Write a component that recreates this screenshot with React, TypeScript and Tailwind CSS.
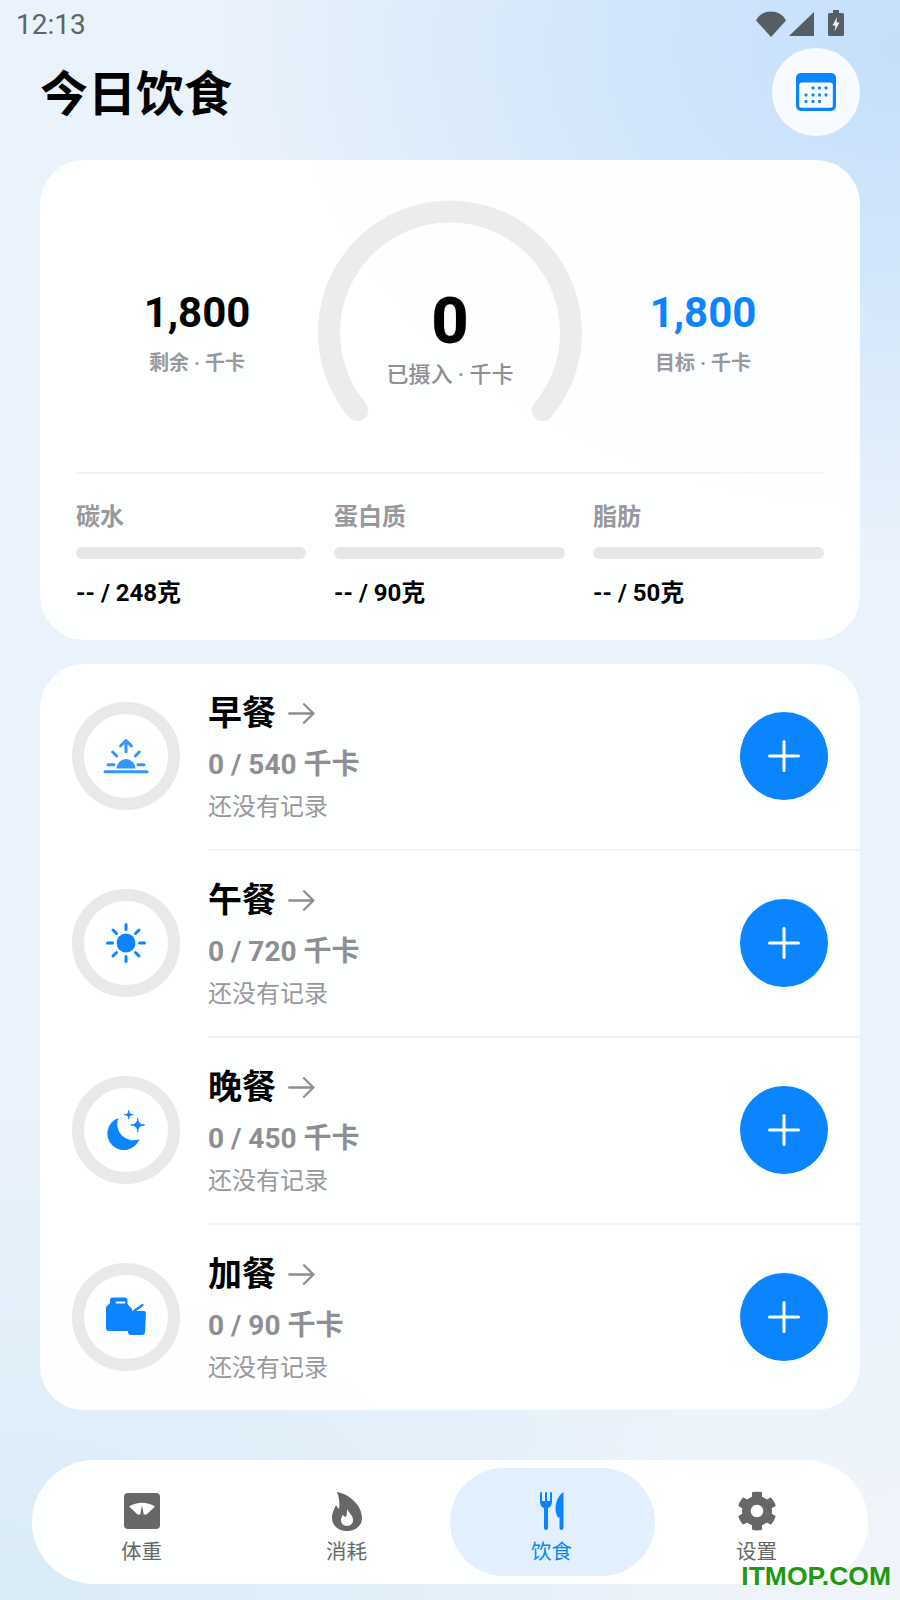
import React from "react";
import { FaCog } from "react-icons/fa";

const FONT = "font-['Roboto','Noto_Sans_CJK_SC',sans-serif]";

function Star({ cx, cy, r }: { cx: number; cy: number; r: number }) {
  return (
    <path
      d={`M${cx} ${cy - r}Q${cx} ${cy} ${cx + r} ${cy}Q${cx} ${cy} ${cx} ${cy + r}Q${cx} ${cy} ${cx - r} ${cy}Q${cx} ${cy} ${cx} ${cy - r}Z`}
      fill="#0a84ff"
      stroke="#0a84ff"
      strokeWidth="0.8"
      strokeLinejoin="round"
    />
  );
}

function Sunrise() {
  return (
    <svg width="60" height="60" viewBox="0 0 60 60" fill="none" stroke="#3097ff" strokeWidth="3" strokeLinecap="round" strokeLinejoin="round">
      <path d="M9 45.700H51" />
      <path d="M20.500 42.600a9.500 9.500 0 0 1 19 0z" fill="#3097ff" stroke="none" />
      <path d="M12 38.700H18M42 38.700H48M16.700 26L20.700 30M43.300 26L39.300 30" />
      <path d="M30 15V25.700M24.500 20L30 14.500L35.500 20" />
    </svg>
  );
}

function Sun() {
  return (
    <svg width="60" height="60" viewBox="0 0 60 60" fill="none" stroke="#0a84ff" strokeWidth="3" strokeLinecap="round">
      <circle cx="30" cy="30" r="9.500" fill="#0a84ff" stroke="none" />
      <path d="M30 11.500V16.500M30 43.500V48.500M11.500 30H16.500M43.500 30H48.500M17 17L20.500 20.500M39.500 39.500L43 43M17 43L20.500 39.500M39.500 20.500L43 17" />
    </svg>
  );
}

function Moon() {
  return (
    <svg width="60" height="60" viewBox="0 0 60 60" fill="none">
      <path d="M22.500 18A16.500 16.500 0 1 0 43.500 39A16 16 0 0 1 22.500 18Z" fill="#0a84ff" />
      <Star cx={41.7} cy={25} r={7} />
      <Star cx={32.7} cy={14.7} r={4.5} />
    </svg>
  );
}

function Snack() {
  return (
    <svg width="60" height="60" viewBox="0 0 60 60" fill="none">
      <path d="M14 13a2.500 2.500 0 0 1 2.500-2.500H29a2.500 2.500 0 0 1 2.500 2.500V17L36 22V44H13a3 3 0 0 1-3-3V20L14 16Z" fill="#0a84ff" />
      <path d="M31 26a2 2 0 0 1 2-2H48a2 2 0 0 1 2 2L49 45a3 3 0 0 1-3 3H35a3 3 0 0 1-3-3Z" fill="#0a84ff" />
      <path d="M37.500 24.500L46.500 18" stroke="#0a84ff" strokeWidth="2.2" strokeLinecap="round" />
      <path d="M20.500 15.500H28.500" stroke="#ffffff" strokeWidth="1.8" strokeLinecap="round" />
    </svg>
  );
}

function Arrow() {
  return (
    <svg width="27" height="21" viewBox="0 0 27 21" fill="none" stroke="#8e8e93" strokeWidth="2.300" strokeLinecap="round" strokeLinejoin="round" className="ml-[12px]">
      <path d="M1.200 10.500H25.500M16 1.200L25.500 10.500L16 19.800" />
    </svg>
  );
}

function Calendar() {
  const dots: [number, number][] = [
    [17, 15], [23.5, 15], [30, 15],
    [10, 22], [17, 22], [23.5, 22], [30, 22],
    [10, 28.5], [17, 28.5], [23.5, 28.5],
  ];
  return (
    <svg width="40" height="38" viewBox="0 0 40 38">
      <rect x="0" y="0" width="40" height="38" rx="5" fill="#0a84ff" />
      <rect x="3.200" y="9.500" width="33.600" height="25.200" rx="2.500" fill="#f7fbff" />
      {dots.map(([x, y]) => (
        <rect key={`${x}-${y}`} x={x - 1.4} y={y - 1.4} width="2.8" height="2.8" rx="0.6" fill="#0a84ff" />
      ))}
    </svg>
  );
}

function Scale() {
  return (
    <svg width="36" height="36" viewBox="0 0 36 36">
      <rect width="36" height="36" rx="4" fill="#666867" />
      <path d="M5 13.500Q18 6 31 13.500L22.500 21.500H13.500Z" fill="#fff" />
      <path d="M18 12.500L19.800 21.800H16.200Z" fill="#666867" />
    </svg>
  );
}

function Flame() {
  return (
    <svg width="30" height="40" viewBox="0 0 30 40">
      <path d="M5 1C17 3 30 14 30 27C30 35 23 40 15 40C7 40 0 35 0 27C0 21 3 17 4 14C5 16 6 17 7 18C8 12 7 6 5 1Z" fill="#666867" />
      <path d="M15 18C17 22 21 24 21 29C21 33 18 35 15 35C12 35 9 33 9 29C9 27 10 25 11 24C12 25 13 26 14 26C15 24 15 21 15 18Z" fill="#fff" />
    </svg>
  );
}

function Cutlery() {
  return (
    <svg width="24" height="40" viewBox="0 0 24 40" fill="#0a84ff">
      <path d="M1 2V11M6 2V11M11 2V11" stroke="#0a84ff" strokeWidth="2" strokeLinecap="round" />
      <path d="M0 10H12C12 14 10.500 16 8 17.200V37a2 2 0 0 1-4 0V17.200C1.500 16 0 14 0 10Z" />
      <path d="M23.500 1V37a2 2 0 0 1-4 0V26.500H18C15.500 22 15 18 16 13C17 8 20 3 23.500 1Z" />
    </svg>
  );
}

function Stat({ value, label, blue }: { value: string; label: string; blue?: boolean }) {
  return (
    <div className="flex flex-col items-center pt-[128px]">
      <div className={`h-[50px] text-[42px] leading-[50px] font-bold ${blue ? "text-[#0a84ff]" : "text-black"}`}>{value}</div>
      <div className="mt-[11px] h-[28px] text-[20px] leading-[28px] font-bold text-[#98989d]">{label}</div>
    </div>
  );
}

function Macro({ name, value }: { name: string; value: string }) {
  return (
    <div className="flex flex-col">
      <div className="h-[32px] text-[24px] leading-[32px] font-bold text-[#98989d]">{name}</div>
      <div className="mt-[14px] h-[12px] rounded-full bg-[#e6e7e9]" />
      <div className="mt-[18px] h-[32px] text-[24px] leading-[32px] font-bold text-black">{value}</div>
    </div>
  );
}

function Meal({
  name, budget, icon, rowClass, circleClass, contentClass,
}: {
  name: string; budget: string; icon: React.ReactNode; rowClass: string; circleClass: string; contentClass: string;
}) {
  return (
    <div className={`flex ${rowClass}`}>
      <div className={`ml-[32px] flex h-[108px] w-[108px] shrink-0 items-center justify-center self-center rounded-full border-[12px] border-[#e8e9eb] ${circleClass}`}>
        {icon}
      </div>
      <div className={`ml-[28px] flex flex-1 items-center pr-[32px] ${contentClass}`}>
        <div className="mt-[3px] flex flex-col">
          <div className="flex h-[44px] items-center">
            <span className="text-[34px] leading-[44px] font-bold text-black">{name}</span>
            <Arrow />
          </div>
          <div className="mt-[10px] h-[40px] text-[28px] leading-[40px] font-bold text-[#8e8e93]">{budget}</div>
          <div className="mt-[5px] h-[34px] text-[24px] leading-[34px] text-[#98989d]">还没有记录</div>
        </div>
        <div className="ml-auto flex h-[88px] w-[88px] items-center justify-center rounded-full bg-[#0a84ff]">
          <svg width="32" height="32" viewBox="0 0 32 32" stroke="#ffffff" strokeWidth="3" strokeLinecap="round">
            <path d="M16 1.500V30.500M1.500 16H30.500" />
          </svg>
        </div>
      </div>
    </div>
  );
}

function Tab({ label, icon, active }: { label: string; icon: React.ReactNode; active?: boolean }) {
  return (
    <div className={`flex h-[108px] w-[205px] flex-col items-center rounded-full pr-[2px] pt-[23px] ${active ? "bg-[#e1effe]" : ""}`}>
      <div className="flex h-[40px] items-center justify-center">{icon}</div>
      <div className={`mt-[7px] h-[28px] text-[20.5px] leading-[28px] ${active ? "text-[#0a84ff]" : "text-[#666867]"}`}>{label}</div>
    </div>
  );
}

export default function App() {
  return (
    <div
      className={`${FONT} relative flex h-[1600px] w-[900px] flex-col overflow-hidden bg-[#eaf2fb] bg-[radial-gradient(ellipse_75%_32%_at_100%_3%,#c5dffb_0%,#d5e8fb_50%,rgba(220,235,250,0)_100%),radial-gradient(ellipse_80%_30%_at_0%_100%,#d9ecf8_0%,rgba(217,236,248,0)_100%),radial-gradient(ellipse_50%_20%_at_100%_100%,#f1f5fa_0%,rgba(241,245,250,0)_100%)]`}
    >
      <div className="flex h-[48px] shrink-0 items-start justify-between pl-[16px] pr-[56px]">
        <div className="mt-[7px] text-[28px] leading-[36px] text-[#5f6468]">12:13</div>
        <div className="mt-[10px] flex items-start">
          <svg width="30" height="26" viewBox="0 0 30 26" className="mt-[1px]">
            <path d="M0 9.500A17 17 0 0 1 30 9.500L15 26Z" fill="#555d65" />
          </svg>
          <svg width="25" height="24" viewBox="0 0 25 24" className="ml-[3px] mt-[2px]">
            <path d="M0 24L25 0V24Z" fill="#555d65" />
          </svg>
          <svg width="16" height="26" viewBox="0 0 16 26" className="ml-[14px]">
            <path d="M5 0H11V3H14.500A1.500 1.500 0 0 1 16 4.500V24.500A1.500 1.500 0 0 1 14.500 26H1.500A1.500 1.500 0 0 1 0 24.500V4.500A1.500 1.500 0 0 1 1.500 3H5Z" fill="#555d65" />
            <path d="M9 7L4.500 15.500H7.500L6.500 21.500L11.500 12.500H8.500Z" fill="#eef5fd" />
          </svg>
        </div>
      </div>

      <div className="flex h-[88px] shrink-0 items-center justify-between pl-[40px] pr-[40px]">
        <h1 className="mt-[5px] text-[48px] leading-[60px] font-bold text-black">今日饮食</h1>
        <div className="flex h-[88px] w-[88px] items-center justify-center rounded-full bg-[#f7fbff]">
          <Calendar />
        </div>
      </div>

      <section className="mx-[40px] mt-[24px] h-[480px] shrink-0 rounded-[44px] bg-white/[0.94] px-[36px]">
        <div className="grid h-[312px] grid-cols-[242px_264px_242px]">
          <Stat value="1,800" label="剩余 · 千卡" />
          <div className="relative pt-[40px]">
            <svg width="264" height="225" viewBox="0 0 264 225" fill="none" className="block">
              <path d="M39.300 210.200A121 121 0 1 1 224.700 210.200" stroke="#ebecee" strokeWidth="22" strokeLinecap="round" />
            </svg>
            <div className="absolute inset-x-0 top-[126px] flex flex-col items-center">
              <div className="h-[70px] text-[65px] leading-[70px] font-extrabold text-black">0</div>
              <div className="mt-[4px] h-[30px] text-[22px] leading-[30px] font-medium text-[#8e8e93]">已摄入 · 千卡</div>
            </div>
          </div>
          <Stat value="1,800" label="目标 · 千卡" blue />
        </div>
        <div className="h-[2px] bg-[#f3f3f6]" />
        <div className="mt-[27px] grid grid-cols-[230px_231px_231px] gap-[28px]">
          <Macro name="碳水" value="-- / 248克" />
          <Macro name="蛋白质" value="-- / 90克" />
          <Macro name="脂肪" value="-- / 50克" />
        </div>
      </section>

      <section className="mx-[40px] mt-[24px] flex h-[746px] shrink-0 flex-col rounded-[44px] bg-white/[0.94]">
        <Meal name="早餐" budget="0 / 540 千卡" icon={<Sunrise />} rowClass="h-[187px]" circleClass="mb-[3px]" contentClass="border-b-2 border-[#f3f3f6] pb-[1px]" />
        <Meal name="午餐" budget="0 / 720 千卡" icon={<Sun />} rowClass="h-[187px]" circleClass="mb-[3px]" contentClass="border-b-2 border-[#f3f3f6] pb-[1px]" />
        <Meal name="晚餐" budget="0 / 450 千卡" icon={<Moon />} rowClass="h-[187px]" circleClass="mb-[3px]" contentClass="border-b-2 border-[#f3f3f6] pb-[1px]" />
        <Meal name="加餐" budget="0 / 90 千卡" icon={<Snack />} rowClass="h-[185px]" circleClass="mb-[1px]" contentClass="pb-[1px]" />
      </section>

      <nav className="mx-[32px] mt-[50px] flex h-[124px] shrink-0 rounded-[62px] bg-white/[0.96] p-[8px]">
        <Tab label="体重" icon={<Scale />} />
        <Tab label="消耗" icon={<Flame />} />
        <Tab label="饮食" icon={<Cutlery />} active />
        <Tab label="设置" icon={<FaCog className="h-[40px] w-[40px] text-[#666867]" />} />
      </nav>

      <div className="absolute bottom-[9px] right-[9px] font-['Liberation_Sans',sans-serif] text-[26.5px] leading-[30px] font-bold text-[#1f9a10]">ITMOP.COM</div>
    </div>
  );
}
